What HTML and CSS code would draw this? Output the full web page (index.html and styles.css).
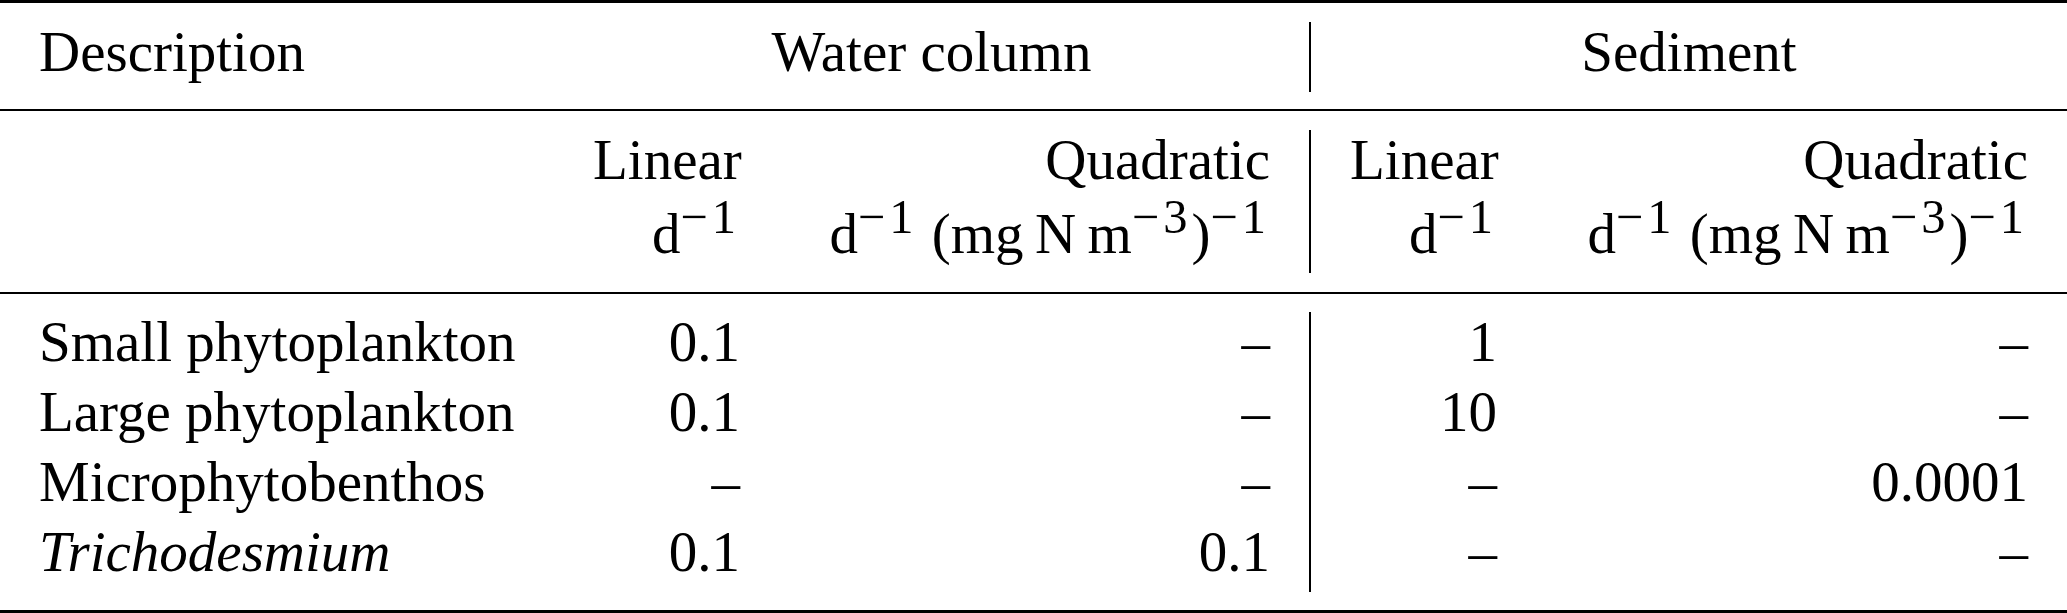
FILE: index.html
```html
<!DOCTYPE html>
<html lang="en">

<head>
    <meta charset="UTF-8">
    <title>Mortality rates</title>
    <link rel="stylesheet" href="styles.css">
</head>

<body>
    <div class="table">
        <div class="rule thick"></div>

        <!-- Group headings -->
        <div class="grid head">
            <div class="cell left">Description</div>
            <div class="cell group">Water column</div>
            <div class="cell group sep">Sediment</div>
        </div>

        <div class="rule"></div>

        <!-- Rate type and units -->
        <div class="grid units">
            <div class="cell"></div>
            <div class="cell">Linear</div>
            <div class="cell">Quadratic</div>
            <div class="cell sep">Linear</div>
            <div class="cell">Quadratic</div>

            <div class="cell unit"></div>
            <div class="cell unit">d<sup>−1</sup></div>
            <div class="cell unit">d<sup>−1</sup> (mg&thinsp;N&thinsp;m<sup>−3</sup>)<sup>−1</sup></div>
            <div class="cell unit sep">d<sup>−1</sup></div>
            <div class="cell unit">d<sup>−1</sup> (mg&thinsp;N&thinsp;m<sup>−3</sup>)<sup>−1</sup></div>
        </div>

        <div class="rule"></div>

        <!-- Values -->
        <div class="grid body">
            <div class="cell left">Small phytoplankton</div>
            <div class="cell">0.1</div>
            <div class="cell">–</div>
            <div class="cell sep">1</div>
            <div class="cell">–</div>

            <div class="cell left">Large phytoplankton</div>
            <div class="cell">0.1</div>
            <div class="cell">–</div>
            <div class="cell sep">10</div>
            <div class="cell">–</div>

            <div class="cell left">Microphytobenthos</div>
            <div class="cell">–</div>
            <div class="cell">–</div>
            <div class="cell sep">–</div>
            <div class="cell">0.0001</div>

            <div class="cell left"><em>Trichodesmium</em></div>
            <div class="cell">0.1</div>
            <div class="cell">0.1</div>
            <div class="cell sep">–</div>
            <div class="cell">–</div>
        </div>

        <div class="rule thick"></div>
    </div>
</body>

</html>
```

FILE: styles.css
```css
body {
    font-family: "Liberation Serif", "Times New Roman", serif;
    font-size: 57px;
    background-color: white;
    color: #000;
    margin: 0;
}

.table {
    width: 2067px;
}

.rule {
    height: 2px;
    background-color: #000;
}

.rule.thick {
    height: 3px;
}

.grid {
    display: grid;
    grid-template-columns: 554px 225px 530px 227px 531px;
}

.head {
    padding: 19px 0 17px;
}

.units {
    padding: 19px 0;
}

.body {
    padding: 18px 0;
}

.cell {
    padding: 0 39px 10px;
    line-height: 60px;
    text-align: right;
    white-space: nowrap;
}

.cell.left {
    text-align: left;
}

.cell.group {
    grid-column: span 2;
    text-align: center;
}

.cell.sep {
    border-left: 2px solid #000;
}

.cell.unit {
    padding-top: 4px;
    padding-bottom: 9px;
}

sup {
    font-size: 0.85em;
    line-height: 0;
    vertical-align: 20px;
    letter-spacing: 4px;
}

em {
    font-style: italic;
}
```
